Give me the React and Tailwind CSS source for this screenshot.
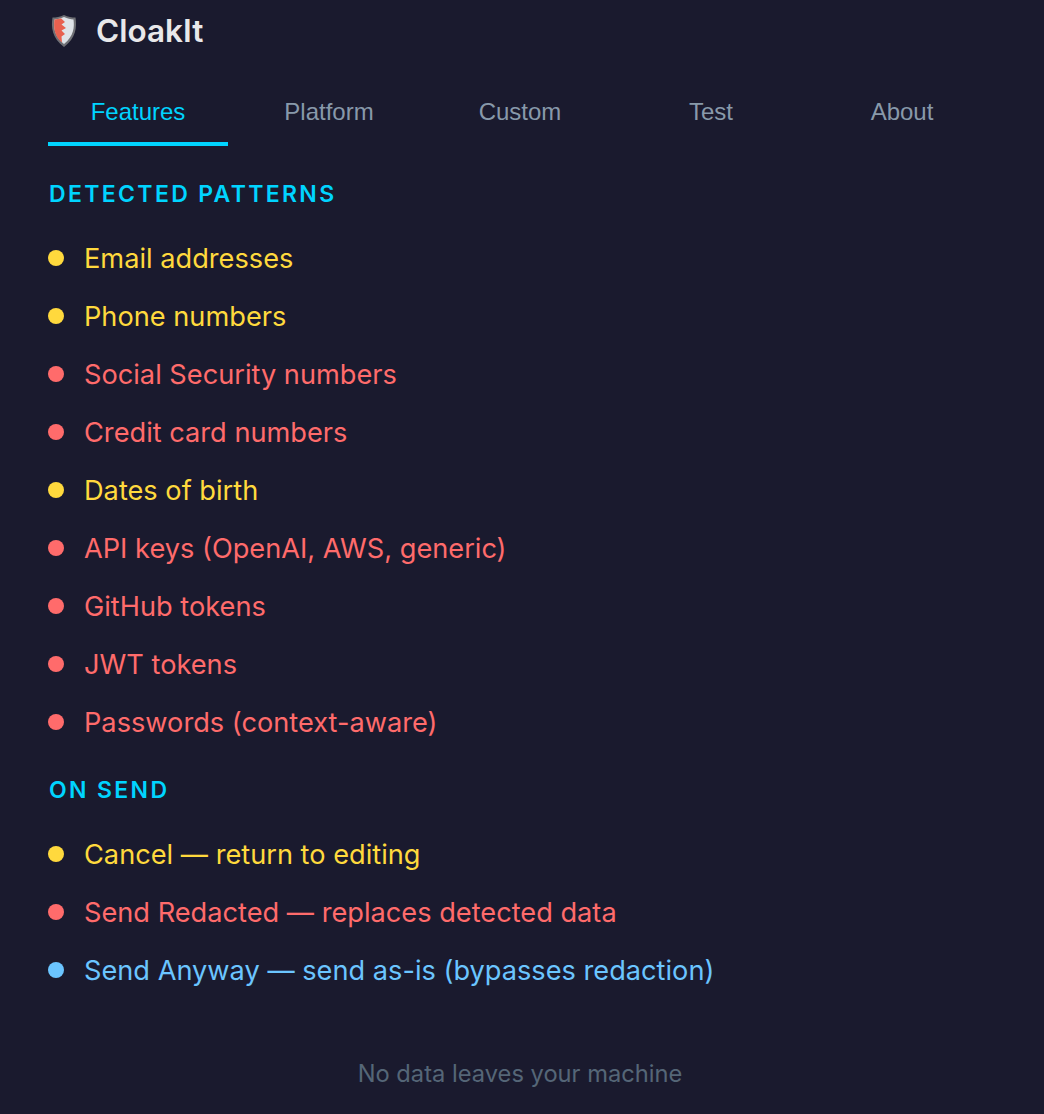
const patterns = [
  ["Email addresses", "y"],
  ["Phone numbers", "y"],
  ["Social Security numbers", "r"],
  ["Credit card numbers", "r"],
  ["Dates of birth", "y"],
  ["API keys (OpenAI, AWS, generic)", "r"],
  ["GitHub tokens", "r"],
  ["JWT tokens", "r"],
  ["Passwords (context-aware)", "r"],
];

const onSend = [
  ["Cancel — return to editing", "y"],
  ["Send Redacted — replaces detected data", "r"],
  ["Send Anyway — send as-is (bypasses redaction)", "b"],
];

const colors = {
  y: { text: "text-[#ffd93d]", dot: "bg-[#ffd93d]" },
  r: { text: "text-[#ff6b6b]", dot: "bg-[#ff6b6b]" },
  b: { text: "text-[#6bc5ff]", dot: "bg-[#6bc5ff]" },
};

const tabs = ["Features", "Platform", "Custom", "Test", "About"];

const Row = ({ label, tone }) => (
  <li className={`flex items-center gap-5 h-[58px] text-[27.2px] ${colors[tone].text}`}>
    <span className={`w-4 h-4 rounded-full shrink-0 ${colors[tone].dot}`}></span>
    <span className="pt-[4px]">{label}</span>
  </li>
);

const App = () => {
  return (
    <div className="w-[1044px] h-[1114px] overflow-hidden bg-[#1a1a2e] pl-12 pr-[52px] font-['Inter',sans-serif]">
      <div className="flex items-center gap-[18px] h-[62px] pl-[2px]">
        <svg width="28" height="34" viewBox="0 0 28 34">
          <path d="M14 1 C18 3 22 3.5 25.5 3.5 C27 13 26 24 14 33 C2 24 1 13 2.5 3.5 C6 3.5 10 3 14 1 Z" fill="#6f7075" />
          <path d="M14 3 C17.5 4.5 20.5 5.3 23.5 5.5 C24.5 13 24 22 14 30 C4 22 3.5 13 4.5 5.5 C7.5 5.3 10.5 4.5 14 3 Z" fill="#dfe3e8" />
          <path d="M4.5 5.5 C7 5.3 9 4.8 11 4.2 L15 8 L11.5 10.5 L16 14 L11.5 16.5 L15 20 L11.5 22.5 L12 28.4 C4 22 3.5 13 4.5 5.5 Z" fill="#e8604f" />
        </svg>
        <span className="text-[31.5px] font-semibold text-[#e8e8ea]">CloakIt</span>
      </div>
      <div className="flex gap-[11px] mt-[18px] h-[66px] pt-[2px] font-['Liberation_Sans',sans-serif]">
        {tabs.map((t, i) => (
          <div
            key={t}
            className={`flex-1 flex items-center justify-center text-[24px] border-b-4 ${
              i === 0 ? "text-[#00d4ff] border-[#00d4ff]" : "text-[#8899aa] border-transparent"
            }`}
          >
            {t}
          </div>
        ))}
      </div>
      <h2 className="mt-[31px] pl-[1px] text-[23px] font-semibold tracking-[2.35px] text-[#00d4ff]">DETECTED PATTERNS</h2>
      <ul className="mt-[17px]">
        {patterns.map(([label, tone]) => (
          <Row key={label} label={label} tone={tone} />
        ))}
      </ul>
      <h2 className="mt-[22px] pl-[1px] text-[23px] font-semibold tracking-[2.35px] text-[#00d4ff]">ON SEND</h2>
      <ul className="mt-[17.5px]">
        {onSend.map(([label, tone]) => (
          <Row key={label} label={label} tone={tone} />
        ))}
      </ul>
      <p className="mt-[57.5px] text-center text-[23.7px] text-[#556677]">No data leaves your machine</p>
    </div>
  );
};

export default App;
